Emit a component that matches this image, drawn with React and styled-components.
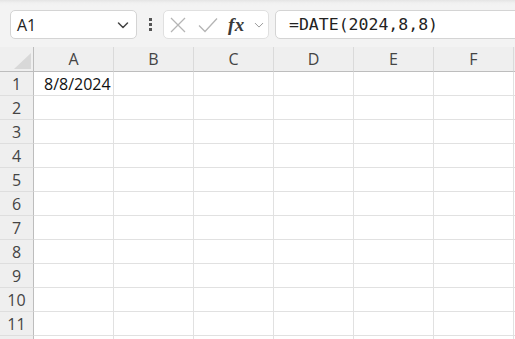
import React from 'react';
import styled, { createGlobalStyle } from 'styled-components';

const GlobalStyle = createGlobalStyle`
  html, body { margin: 0; padding: 0; background: #fff; overflow: hidden; }
  body { font-family: "Open Sans", "Noto Sans", sans-serif; }
`;

const columns = ['A', 'B', 'C', 'D', 'E', 'F', ''];
const rows = [1, 2, 3, 4, 5, 6, 7, 8, 9, 10, 11, ''];

const Page = styled.div`
  width: 515px;
  height: 339px;
  overflow: hidden;
  display: flex;
  flex-direction: column;
`;

const Toolbar = styled.div`
  flex-shrink: 0;
  height: 47px;
  box-sizing: border-box;
  padding: 10px 0 0 10px;
  background: linear-gradient(#e4e4e4 0, #f1f1f1 3px, #f3f3f3 6px);
  display: flex;
  align-items: flex-start;
`;

const Box = styled.div`
  height: 29px;
  box-sizing: border-box;
  background: #fff;
  border: 1px solid ${p => p.$light ? '#e0e0e0' : '#d4d4d4'};
  border-radius: 5px;
  display: flex;
  align-items: center;
`;

const NameBox = styled(Box)`
  width: 127px;
  padding: 0 7px 0 6px;
  justify-content: space-between;
  color: #222;
  font-size: 16px;
`;

const Dots = styled.div`
  width: 26px;
  height: 29px;
  display: flex;
  flex-direction: column;
  align-items: center;
  justify-content: center;
  gap: 2px;
  span {
    width: 3px;
    height: 3px;
    background: #555;
  }
`;

const FnBox = styled(Box)`
  width: 106px;
  padding: 0 0 0 6px;
`;

const IconSlot = styled.div`
  width: ${p => p.$w}px;
  display: flex;
  align-items: center;
`;

const Fx = styled.span`
  font-family: "Liberation Serif", "DejaVu Serif", serif;
  font-style: italic;
  font-weight: 700;
  font-size: 19px;
  color: #3a3a3a;
  letter-spacing: 0.5px;
  line-height: 1;
`;

const FormulaBox = styled(Box)`
  flex: 1;
  margin-left: 6px;
  margin-right: -10px;
  padding-left: 13px;
  border-radius: 5px 0 0 5px;
  font-family: "DejaVu Sans Mono", "Liberation Mono", monospace;
  font-size: 16.5px;
  color: #222;
`;

const Grid = styled.div`
  flex-shrink: 0;
  display: grid;
  grid-template-columns: 34px repeat(7, 80px);
  grid-template-rows: 25px;
  grid-auto-rows: 24px;
`;

const Corner = styled.div`
  background: #efefef;
  border-right: 1px solid #bdbdbd;
  border-bottom: 1px solid #bdbdbd;
  position: relative;
  box-sizing: border-box;
  &::after {
    content: '';
    position: absolute;
    right: 2px;
    bottom: 2px;
    width: 0;
    height: 0;
    border-left: 17px solid transparent;
    border-bottom: 16px solid #d8d8d8;
  }
`;

const ColHead = styled.div`
  background: #efefef;
  border-bottom: 1px solid #bdbdbd;
  border-right: 1px solid #dadada;
  box-sizing: border-box;
  display: flex;
  align-items: center;
  justify-content: center;
  font-size: 16px;
  color: #444;
  padding-bottom: 1px;
`;

const RowHead = styled.div`
  background: #efefef;
  border-right: 1px solid #bdbdbd;
  border-bottom: 1px solid #dedede;
  box-sizing: border-box;
  display: flex;
  align-items: center;
  justify-content: center;
  font-size: 16px;
  color: #444;
`;

const Cell = styled.div`
  border-right: 1px solid #e1e1e1;
  border-bottom: 1px solid #e1e1e1;
  box-sizing: border-box;
  display: flex;
  align-items: center;
  padding-left: ${p => p.$pad}px;
  font-size: 16px;
  color: #111;
  white-space: nowrap;
  overflow: hidden;
`;

const Chevron = ({ size = 12, color = '#444', width = 1.5 }) => (
  <svg width={size} height={size} viewBox="0 0 12 12">
    <path d="M1.5 4 L6 8.5 L10.5 4" fill="none" stroke={color} strokeWidth={width} strokeLinecap="round" strokeLinejoin="round" />
  </svg>
);

const CrossIcon = () => (
  <svg width="16" height="16" viewBox="0 0 16 16">
    <path d="M1 1 L15 15 M15 1 L1 15" stroke="#b5b5b5" strokeWidth="1.3" fill="none" />
  </svg>
);

const CheckIcon = () => (
  <svg width="20" height="16" viewBox="0 0 20 16">
    <path d="M1 8.5 L7 14.5 L19 1.5" stroke="#b5b5b5" strokeWidth="1.3" fill="none" />
  </svg>
);

export default function App() {
  return (
    <Page>
      <GlobalStyle />
      <Toolbar>
        <NameBox>
          <span>A1</span>
          <Chevron />
        </NameBox>
        <Dots><span /><span /><span /></Dots>
        <FnBox $light>
          <IconSlot $w={28}><CrossIcon /></IconSlot>
          <IconSlot $w={30}><CheckIcon /></IconSlot>
          <IconSlot $w={26}><Fx>fx</Fx></IconSlot>
          <IconSlot $w={12}><Chevron size={10} color="#9a9a9a" width={1.2} /></IconSlot>
        </FnBox>
        <FormulaBox>=DATE(2024,8,8)</FormulaBox>
      </Toolbar>
      <Grid>
        <Corner />
        {columns.map((c, i) => <ColHead key={i}>{c}</ColHead>)}
        {rows.map((r, ri) => (
          <React.Fragment key={ri}>
            <RowHead>{r}</RowHead>
            {columns.map((c, ci) => (
              <Cell key={ci} $pad={10}>{r === 1 && c === 'A' ? '8/8/2024' : ''}</Cell>
            ))}
          </React.Fragment>
        ))}
      </Grid>
    </Page>
  );
}
